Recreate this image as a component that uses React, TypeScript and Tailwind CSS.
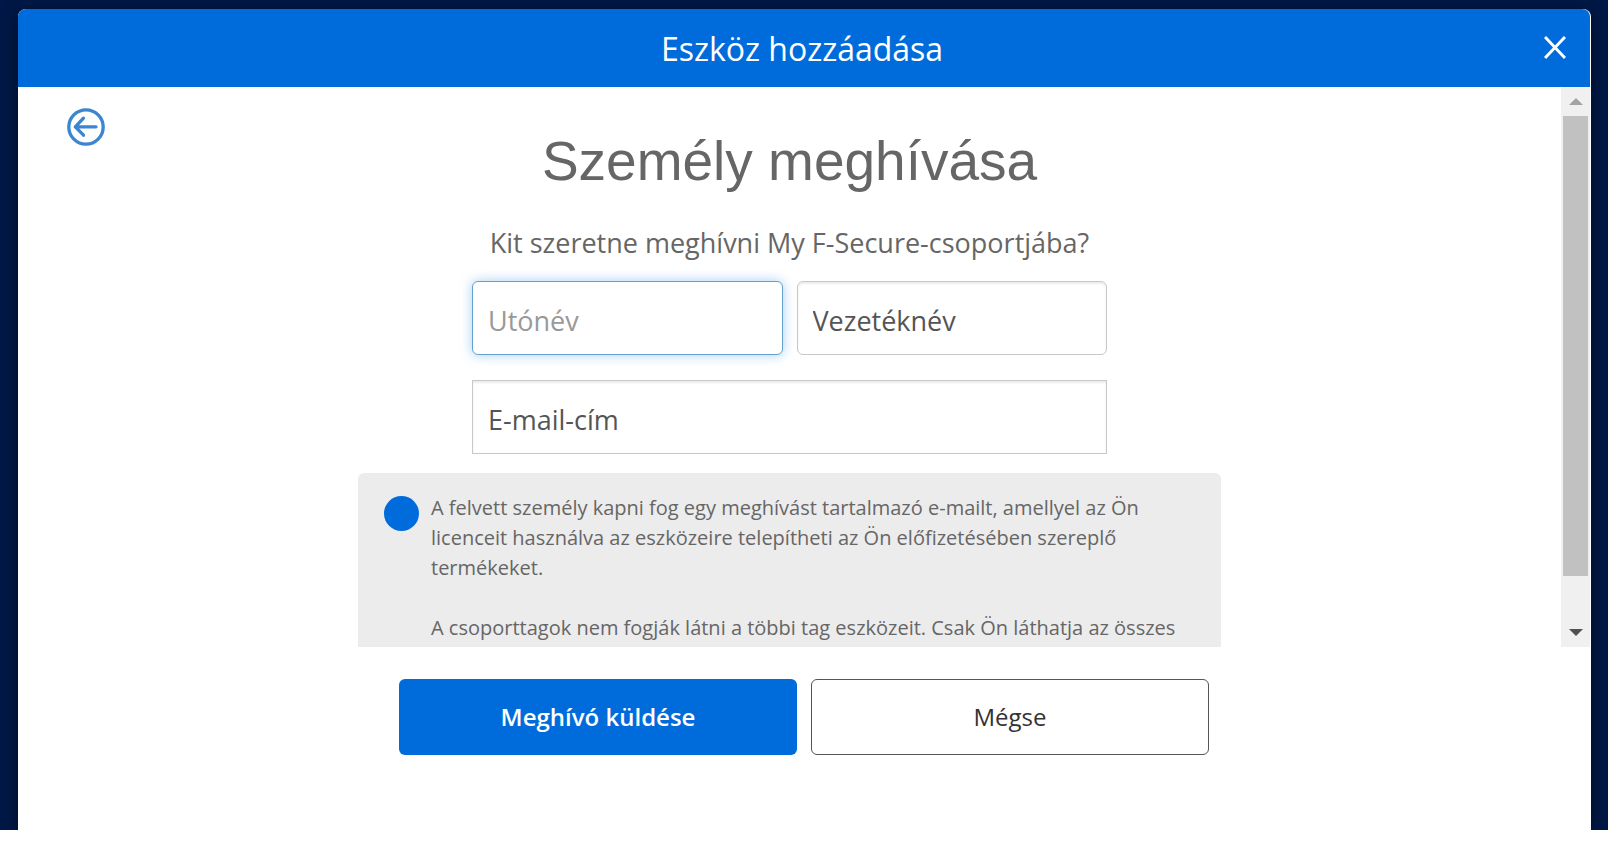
import { useState } from "react";
import type { FormEvent } from "react";

function CloseIcon() {
  return (
    <svg width="22" height="24" viewBox="0 0 22 24" fill="none" aria-hidden="true">
      <path d="M1 1L21 22M21 1L1 22" stroke="currentColor" strokeWidth="3" />
    </svg>
  );
}

function BackIcon() {
  return (
    <svg width="38" height="38" viewBox="0 0 38 38" fill="none" aria-hidden="true">
      <g stroke="currentColor" strokeWidth="3.3" strokeLinecap="round" strokeLinejoin="round">
        <circle cx="19" cy="19" r="17.2" />
        <path d="M29 18.8H8.5M16.5 10.2L8.3 18.8L16.5 27.2" />
      </g>
    </svg>
  );
}

function ScrollTrack() {
  return (
    <div className="mr-px flex w-[29px] flex-shrink-0 flex-col items-center bg-[#f0f0f0]" aria-hidden="true">
      <div className="flex h-[29px] items-center">
        <svg width="14" height="7" viewBox="0 0 14 7">
          <path d="M7 0L14 7H0Z" fill="#a3a3a3" />
        </svg>
      </div>
      <div className="w-[25px] flex-[11] bg-[#c1c1c1]" />
      <div className="flex-1" />
      <div className="flex h-[29px] items-center">
        <svg width="14" height="7" viewBox="0 0 14 7">
          <path d="M0 0H14L7 7Z" fill="#505050" />
        </svg>
      </div>
    </div>
  );
}

const inputBase =
  "block h-[74px] w-full min-w-0 border bg-white px-[15px] pt-1 text-[27px] leading-9 text-[#555] placeholder:opacity-100 focus:outline-none";
const inputPlain = "border-[#c8c8c8] shadow-[inset_0_2px_2px_rgba(0,0,0,0.08)] placeholder:text-[#555]";
const inputActive = "border-[#66a0cc] shadow-[0_0_12px_rgba(102,175,233,0.6)] placeholder:text-[#999]";

export default function App() {
  const [firstName, setFirstName] = useState("");
  const [lastName, setLastName] = useState("");
  const [email, setEmail] = useState("");

  const handleSubmit = (e: FormEvent) => {
    e.preventDefault();
  };

  return (
    <div className="flex h-screen flex-col bg-white pb-[19px] font-['Open_Sans','Noto_Sans',sans-serif]">
      <div className="flex min-h-0 flex-1 flex-col overflow-hidden bg-[#001847] pt-[9px] pr-[17px] pl-[18px]">
        <div
          role="dialog"
          aria-labelledby="dialog-title"
          className="flex min-h-0 flex-1 flex-col rounded-t-lg bg-white shadow-[0_4px_16px_rgba(0,0,0,0.5)]"
        >
          {/* Header */}
          <header className="mr-px grid h-[78px] flex-shrink-0 grid-cols-[1fr_auto_1fr] items-center rounded-t-lg bg-[#006cdb] pr-6 pl-6 text-white">
            <h1 id="dialog-title" className="col-start-2 pt-0.5 pr-1 text-[32px] leading-10">
              Eszköz hozzáadása
            </h1>
            <button type="button" aria-label="Bezárás" className="justify-self-end">
              <CloseIcon />
            </button>
          </header>

          {/* Scrollable form */}
          <div className="flex min-h-0 flex-1">
            <div className="grid min-w-0 flex-1 grid-cols-[1fr_minmax(0,863px)_1fr] items-start overflow-hidden">
              <button type="button" aria-label="Vissza" className="mt-[21px] ml-[49px] justify-self-start text-[#3a86d0]">
                <BackIcon />
              </button>

              <div>
                <h2 className="mt-[42px] text-center font-['Liberation_Sans',Arial,sans-serif] text-[55px] leading-[64px] text-[#666]">
                  Személy meghívása
                </h2>
                <p className="mt-[30px] text-center text-[27px] leading-10 text-[#666]">
                  Kit szeretne meghívni My F-Secure-csoportjába?
                </p>

                <form
                  id="invite"
                  onSubmit={handleSubmit}
                  className="mx-auto mt-[18px] grid max-w-[635px] grid-cols-2 gap-x-3.5 gap-y-[25px]"
                >
                  <input
                    type="text"
                    aria-label="Utónév"
                    placeholder="Utónév"
                    value={firstName}
                    onChange={(e) => setFirstName(e.target.value)}
                    className={`${inputBase} ${inputActive} rounded-md`}
                  />
                  <input
                    type="text"
                    aria-label="Vezetéknév"
                    placeholder="Vezetéknév"
                    value={lastName}
                    onChange={(e) => setLastName(e.target.value)}
                    className={`${inputBase} ${inputPlain} rounded-md`}
                  />
                  <div className="col-span-2">
                    <input
                      type="email"
                      aria-label="E-mail-cím"
                      placeholder="E-mail-cím"
                      value={email}
                      onChange={(e) => setEmail(e.target.value)}
                      className={`${inputBase} ${inputPlain}`}
                    />
                  </div>
                </form>

                {/* Info box */}
                <div className="mt-[19px] flex gap-3 rounded-md bg-[#ececec] px-[26px] pt-5 pb-8">
                  <span className="mt-[3px] size-[35px] flex-shrink-0 rounded-full bg-[#006cdb]" />
                  <div className="text-[20px] leading-[30px] whitespace-nowrap text-[#666]">
                    <p>
                      A felvett személy kapni fog egy meghívást tartalmazó e-mailt, amellyel az Ön
                      <br />
                      licenceit használva az eszközeire telepítheti az Ön előfizetésében szereplő
                      <br />
                      termékeket.
                    </p>
                    <p className="mt-[30px]">A csoporttagok nem fogják látni a többi tag eszközeit. Csak Ön láthatja az összes</p>
                  </div>
                </div>
              </div>
            </div>
            <ScrollTrack />
          </div>

          {/* Actions */}
          <footer className="mr-px flex flex-shrink-0 justify-center gap-3.5 px-6 pt-8 pb-[75px]">
            <button
              type="submit"
              form="invite"
              className="h-[76px] w-full max-w-[398px] rounded-md bg-[#006cdb] text-[24px] font-semibold text-white"
            >
              Meghívó küldése
            </button>
            <button
              type="button"
              className="h-[76px] w-full max-w-[398px] rounded-md border border-[#555] bg-white text-[24px] text-[#333]"
            >
              Mégse
            </button>
          </footer>
        </div>
      </div>
    </div>
  );
}
